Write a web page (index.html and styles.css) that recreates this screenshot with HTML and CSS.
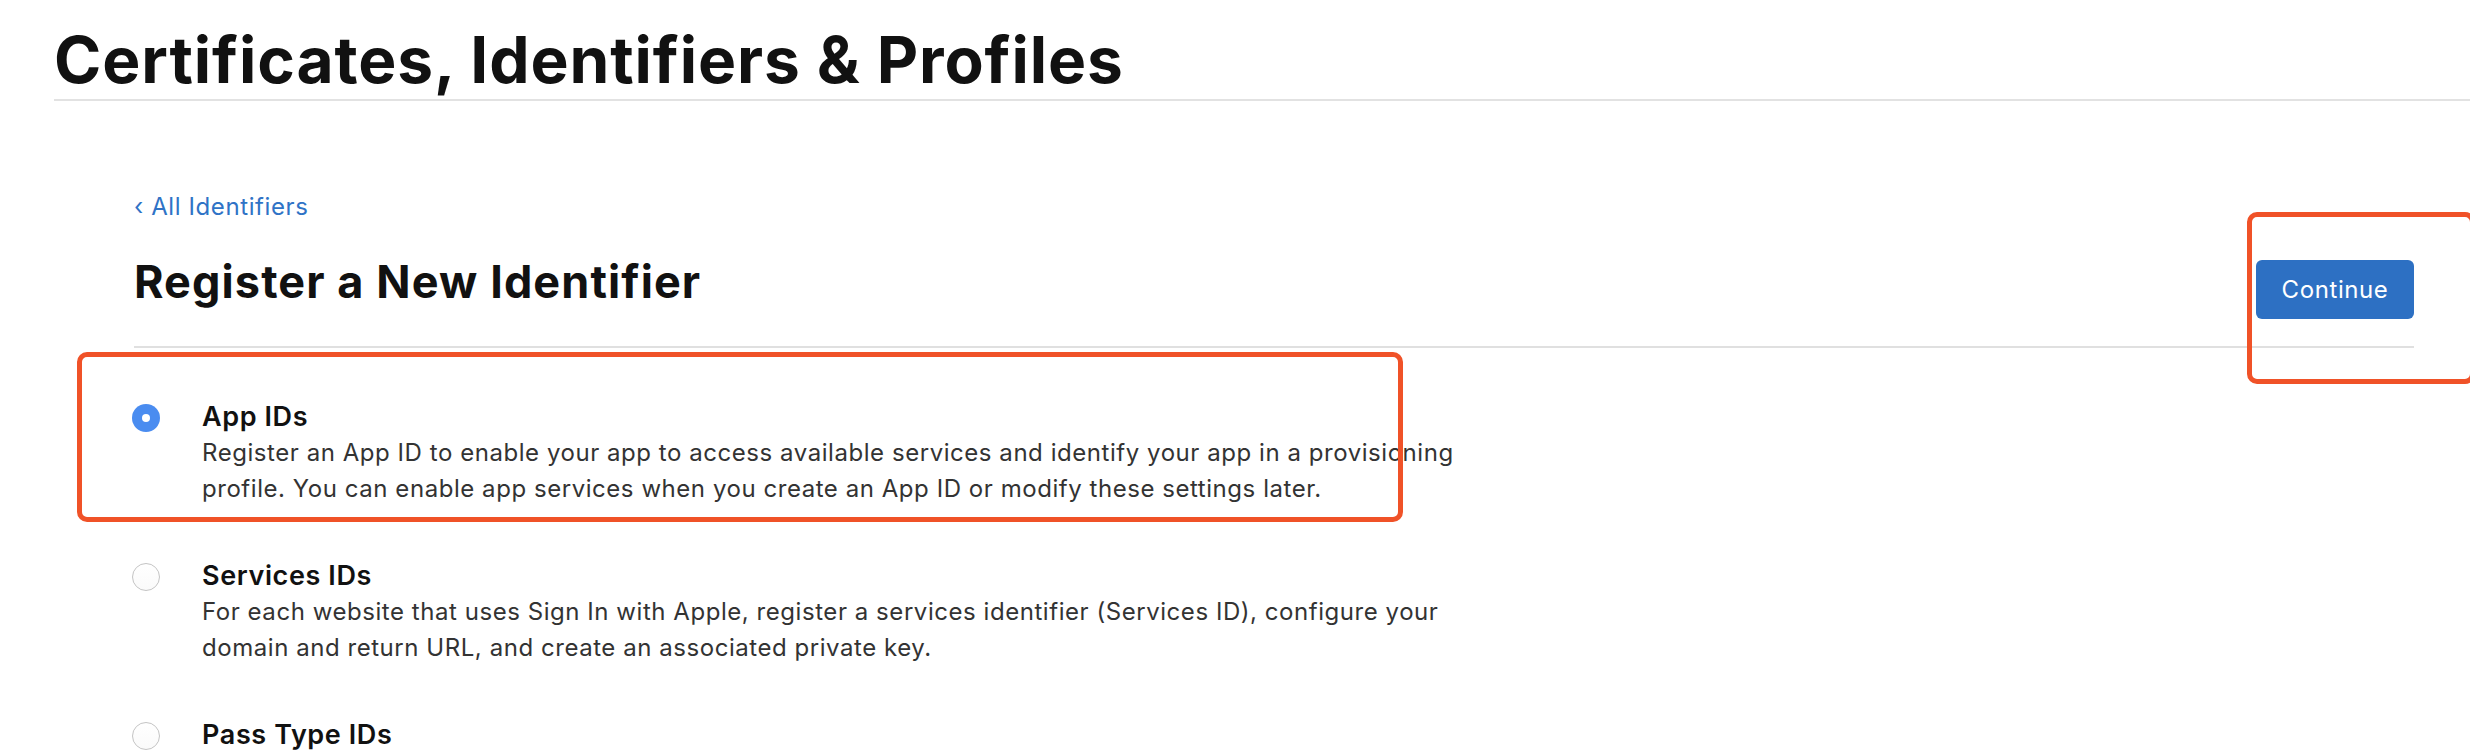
FILE: index.html
```html
<!DOCTYPE html>
<html lang="en">
<head>
<meta charset="utf-8">
<title>Certificates, Identifiers &amp; Profiles</title>
<link rel="stylesheet" href="styles.css">
</head>
<body>
<header class="page-header">
  <h1 class="page-title">Certificates, Identifiers &amp; Profiles</h1>
</header>
<main class="content">
  <a class="back-link" href="#">‹ All Identifiers</a>
  <div class="title-row">
    <h2 class="section-title">Register a New Identifier</h2>
    <button class="btn-continue" type="button">Continue</button>
  </div>
  <ul class="options">
    <li class="option">
      <span class="radio radio-on"></span>
      <div class="option-body">
        <div class="option-title">App IDs</div>
        <p class="option-desc">Register an App ID to enable your app to access available services and identify your app in a provisioning profile. You can enable app services when you create an App ID or modify these settings later.</p>
      </div>
    </li>
    <li class="option">
      <span class="radio"></span>
      <div class="option-body">
        <div class="option-title">Services IDs</div>
        <p class="option-desc">For each website that uses Sign In with Apple, register a services identifier (Services ID), configure your domain and return URL, and create an associated private key.</p>
      </div>
    </li>
    <li class="option">
      <span class="radio"></span>
      <div class="option-body">
        <div class="option-title">Pass Type IDs</div>
      </div>
    </li>
  </ul>
</main>
<div class="annot annot-option"></div>
<div class="annot annot-continue"></div>
</body>
</html>
```
FILE: styles.css
```css
* { box-sizing: border-box; }
html, body { margin: 0; padding: 0; background: #fff; }
body {
  font-family: Inter, "Noto Sans", "Liberation Sans", sans-serif;
  color: #111;
  overflow: hidden;
  height: 752px;
  position: relative;
}
.page-header {
  margin-left: 54px;
  padding-top: 28px;
  padding-bottom: 7px;
  border-bottom: 2px solid #e2e2e2;
}
.page-title {
  margin: 0;
  font-size: 64px;
  line-height: 64px;
  font-weight: 700;
  letter-spacing: 0.9px;
  color: #111;
}
.content {
  padding: 0 56px 0 134px;
}
.back-link {
  display: block;
  margin-top: 91px;
  font-size: 24px;
  line-height: 30px;
  letter-spacing: 0.6px;
  color: #2f73c6;
  text-decoration: none;
}
.title-row {
  display: flex;
  justify-content: space-between;
  align-items: flex-start;
  margin-top: 37px;
  padding-bottom: 27px;
  border-bottom: 2px solid #e0e0e0;
}
.section-title {
  margin: 0;
  font-size: 45px;
  line-height: 45px;
  font-weight: 700;
  letter-spacing: 1.1px;
  color: #111;
}
.btn-continue {
  margin-top: 1px;
  height: 59px;
  width: 158px;
  padding: 0;
  border: none;
  border-radius: 6px;
  background: #2d70c3;
  color: #fff;
  font-family: inherit;
  font-size: 24px;
  font-weight: 400;
  letter-spacing: 0.6px;
}
.options {
  list-style: none;
  margin: 0;
  padding: 52px 0 0 0;
  display: flex;
  flex-direction: column;
  gap: 52px;
}
.option {
  display: flex;
  align-items: flex-start;
  gap: 42px;
}
.radio {
  flex: none;
  width: 28px;
  height: 28px;
  margin-left: -2px;
  margin-top: 4px;
  border-radius: 50%;
  border: 1px solid #c4c4c4;
  background: linear-gradient(#ffffff, #fafafa);
  position: relative;
}
.radio-on {
  border: none;
  background: #4a8cf0;
}
.radio-on::after {
  content: "";
  position: absolute;
  left: 10px;
  top: 10px;
  width: 8px;
  height: 8px;
  border-radius: 50%;
  background: #fff;
}
.option-body {
  width: 1270px;
}
.option-title {
  font-size: 27px;
  line-height: 34px;
  font-weight: 600;
  letter-spacing: 0.6px;
  color: #111;
}
.option-desc {
  margin: 1px 0 0 0;
  font-size: 24px;
  line-height: 36px;
  letter-spacing: 0.55px;
  color: #333;
}
.annot {
  position: absolute;
  border: 5px solid #f05228;
  border-radius: 10px;
  pointer-events: none;
}
.annot-option {
  left: 77px;
  top: 352px;
  width: 1326px;
  height: 170px;
}
.annot-continue {
  left: 2247px;
  top: 212px;
  width: 228px;
  height: 172px;
}
```
